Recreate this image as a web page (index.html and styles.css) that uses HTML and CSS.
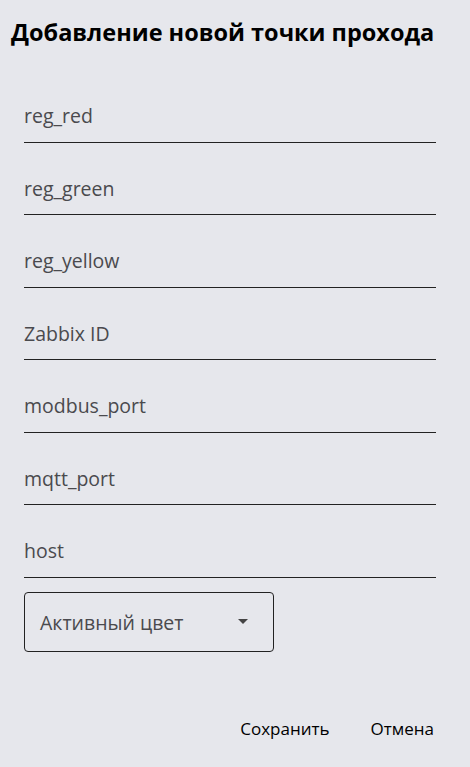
FILE: index.html
```html
<!DOCTYPE html>
<html lang="ru">
<head>
<meta charset="utf-8">
<link rel="stylesheet" href="styles.css">
</head>
<body>
<div class="dialog">
  <h1 class="title">Добавление новой точки прохода</h1>
  <div class="fields">
    <div class="field"><span class="label">reg_red</span></div>
    <div class="field"><span class="label">reg_green</span></div>
    <div class="field"><span class="label">reg_yellow</span></div>
    <div class="field"><span class="label">Zabbix ID</span></div>
    <div class="field"><span class="label">modbus_port</span></div>
    <div class="field"><span class="label">mqtt_port</span></div>
    <div class="field"><span class="label">host</span></div>
  </div>
  <div class="select">
    <span class="select-label">Активный цвет</span>
    <svg class="arrow" width="10" height="5" viewBox="0 0 10 5"><path d="M0 0L10 0L5 5Z" fill="#444"/></svg>
  </div>
  <div class="actions">
    <button class="btn">Сохранить</button>
    <button class="btn">Отмена</button>
  </div>
</div>
</body>
</html>
```
FILE: styles.css
```css
html, body {
  margin: 0;
  padding: 0;
  background: #e6e7ec;
}
body {
  font-family: "Open Sans", "Noto Sans", sans-serif;
  color: #000;
}
.dialog {
  width: 470px;
  height: 767px;
  box-sizing: border-box;
  padding: 0 34px 0 24px;
  display: flex;
  flex-direction: column;
}
.title {
  margin: 17px 0 0 -13px;
  font-size: 23.5px;
  font-weight: 700;
  line-height: 30px;
  white-space: nowrap;
}
.fields {
  margin-top: 23px;
  display: flex;
  flex-direction: column;
}
.field {
  height: 71.5px;
  border-bottom: 1.5px solid #222;
  display: flex;
  align-items: flex-start;
}
.label {
  font-size: 19.5px;
  line-height: 26px;
  color: #4a4a4e;
  margin-top: 33px;
}
.select {
  margin-top: 14px;
  width: 250px;
  height: 60px;
  box-sizing: border-box;
  border: 1px solid #222;
  border-radius: 4px;
  display: flex;
  align-items: center;
  justify-content: space-between;
  padding: 2px 25px 0 15px;
}
.select-label {
  font-size: 19.5px;
  color: #4a4a4e;
}
.arrow {
  margin-top: -2px;
}
.actions {
  margin-top: 65px;
  display: flex;
  justify-content: flex-end;
  gap: 41px;
  margin-right: 2px;
}
.btn {
  font-family: "Open Sans", "Noto Sans", sans-serif;
  font-size: 17px;
  background: none;
  border: none;
  padding: 0;
  color: #000;
}
```
